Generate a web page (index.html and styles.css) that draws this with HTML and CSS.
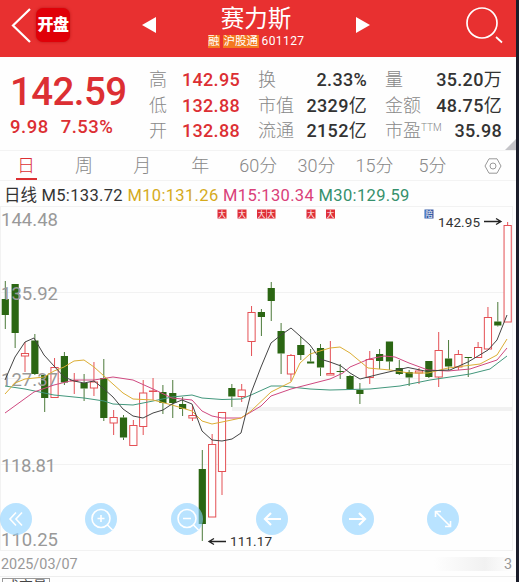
FILE: index.html
```html
<!DOCTYPE html>
<html lang="zh-CN">
<head>
  <meta charset="UTF-8" />
  <meta name="viewport" content="width=device-width, initial-scale=1.0" />
  <title>赛力斯 601127</title>
  <link rel="stylesheet" href="styles.css">
</head>
<body>
  <div class="app">
    <!-- header -->
    <header class="header">
      <svg class="back" width="22" height="38" viewBox="0 0 22 38"><path d="M20 2 3 18.5 20 35" /></svg>
      <span class="badge">开盘</span>
      <svg class="prev" width="14" height="16" viewBox="0 0 14 16"><path d="M0 8 14 0V16Z" /></svg>
      <div class="stock">
        <h1>赛力斯</h1>
        <div class="stock-sub"><span class="tag">融</span><span class="tag">沪股通</span><span class="code">601127</span></div>
      </div>
      <svg class="next" width="14" height="16" viewBox="0 0 14 16"><path d="M14 8 0 0V16Z" /></svg>
      <svg class="search" width="38" height="38" viewBox="0 0 38 38"><circle cx="17" cy="17" r="15" /><path d="m31 31 6 5.500" /></svg>
    </header>

    <!-- quote -->
    <section class="quote">
      <div class="price">
        <div class="last">142.59</div>
        <div class="change"><span>9.98</span><span>7.53%</span></div>
      </div>
      <dl class="stats up">
        <dt>高</dt><dd>142.95</dd>
        <dt>低</dt><dd>132.88</dd>
        <dt>开</dt><dd>132.88</dd>
      </dl>
      <dl class="stats mid">
        <dt>换</dt><dd>2.33%</dd>
        <dt>市值</dt><dd>2329<i>亿</i></dd>
        <dt>流通</dt><dd>2152<i>亿</i></dd>
      </dl>
      <dl class="stats last-col">
        <dt>量</dt><dd>35.20<i>万</i></dd>
        <dt>金额</dt><dd>48.75<i>亿</i></dd>
        <dt>市盈<sup>TTM</sup></dt><dd>35.98</dd>
      </dl>
      <span class="corner"></span>
    </section>

    <!-- period tabs -->
    <nav class="tabs">
      <a class="active">日</a><a>周</a><a>月</a><a>年</a><a>60分</a><a>30分</a><a>15分</a><a>5分</a>
      <svg class="gear" width="18" height="16" viewBox="0 0 18 16"><path d="M5 .8h8L17 8l-4 7.200H5L1 8Z" /><circle cx="9" cy="8" r="3" /></svg>
    </nav>

    <!-- moving averages -->
    <div class="legend">
      <span class="name">日线</span><span class="m5">M5:133.72</span><span class="m10">M10:131.26</span><span class="m15">M15:130.34</span><span class="m30">M30:129.59</span>
    </div>

    <!-- k-line -->
    <div class="chart">
      <svg id="kline" width="516" height="345" viewBox="0 206 516 345">
        <g class="grid">
          <path d="M0 206.500H513M0 292.500H513M0 378.500H513M0 464.500H513M0 550.500H513M.5 206V551M512.500 206V551" />
        </g>
        <rect class="band" x="232" y="407" width="281" height="4" />
        <g id="candles"></g>
        <g class="axis">
          <text x="1" y="226" textLength="57">144.48</text>
          <text x="1" y="300" textLength="57">135.92</text>
          <text x="1" y="386" textLength="57">127.37</text>
          <text x="1" y="472" textLength="55">118.81</text>
          <text x="1" y="546" textLength="57">110.25</text>
        </g>
        <g class="lines">
          <polyline class="m30" points="5,386 25,389 54,395 84,398 104,401 113,404 133,405 153,401 172,397 192,395 202,398 222,399.500 241,399 251,395 271,386 281,386 310,389 330,390 370,389 400,386 430,380 450,377 470,374 490,369 507,356" />
          <polyline class="m15" points="5,413 34,392 54,385 74,380 94,380 113,377 133,380 153,389 172,398 192,400 202,411 212,416 222,418 241,418 261,406 271,396 291,389 330,379 343,373 350,367 369,359 384,356 395,357 409,363 428,370 448,371 470,369 497,360 507,348" />
          <polyline class="m10" points="5,394 15,383 25,379 44,377 54,371 64,367 74,361 84,360 94,367 104,376 123,393 133,399 153,400 172,405 192,411 202,421 212,424 222,422 241,418 251,411 271,392 291,382 300,363 310,354 330,348 340,347 350,353 368,368 390,370 409,373 428,373 448,368 480,364 497,355 507,339" />
          <polyline class="m5" points="5,380 15,357 25,342 34,338 44,355 54,366 64,377 74,381 84,383 94,381 104,389 113,397 123,409 133,416 143,418 153,413 163,410 172,404 182,400 192,404 202,431 212,440 222,441 232,439 241,433 251,393 261,367 271,343 281,335 291,328 300,336 310,345 320,359 330,362 341,366 350,373 360,379 380,374 408,367.500 425,371 450,370 468,362 488,350 497,340 507,315" />
        </g>
        <g id="marks"></g>
        <g class="callout">
          <text x="438" y="227" textLength="42">142.95</text>
          <path d="M484 221.500h17m-5-3 5 3-5 3" />
          <text x="230" y="546" textLength="42">111.17</text>
          <path d="M226 541.500h-17m5-3-5 3 5 3" />
        </g>
      </svg>
      <div class="tools">
        <button><svg viewBox="0 0 32 32"><path d="m16 9.500-6 6.500 6 6.500M22 9.500 16 16l6 6.500" /></svg></button>
        <button><svg viewBox="0 0 32 32"><circle cx="16" cy="15.500" r="9" /><path d="M16 12v7M12.500 15.500h7M22.500 22l5 5" /></svg></button>
        <button><svg viewBox="0 0 32 32"><circle cx="16" cy="15.500" r="9" /><path d="M12 15.500h8M22.500 22l5 5" /></svg></button>
        <button><svg class="bold" viewBox="0 0 32 32"><path d="M25 16H9m6-6-6 6 6 6" /></svg></button>
        <button><svg class="bold" viewBox="0 0 32 32"><path d="M7 16h16m-6-6 6 6-6 6" /></svg></button>
        <button><svg viewBox="0 0 32 32"><path d="m9 9 14 14M8.500 14V8.500H14M23.500 18v5.500H18" /></svg></button>
      </div>
    </div>

    <div class="dates"><span>2025/03/07</span><span class="end">3</span></div>
    <div class="volume"><span>成交量</span></div>
  </div>

  <script>
    // [high, top, bottom, low, up]
    const data = [
      [281, 299, 315, 329, 0], [284, 284, 333, 348, 0], [342, 353.5, 356, 372, 1], [334, 340.5, 374, 375, 0],
      [374, 375, 398, 412, 0], [358, 367.5, 397.5, 398, 1], [352, 356, 382.5, 385, 0], [373, 380.5, 381, 394, 1],
      [374, 383, 388.5, 401, 0], [362, 382, 388, 396, 1], [359, 378, 418, 421, 0], [410, 417.5, 423, 435, 1],
      [415, 417.5, 437.5, 440, 0], [420, 425.5, 445.5, 446, 1], [380, 393, 426.5, 435, 1], [378, 391, 391.5, 400, 1],
      [385, 392, 403, 414, 0], [380, 393, 403, 418, 0], [397, 404, 409, 416, 0], [405, 415.5, 418, 421, 1],
      [450, 469, 524, 541, 0], [434, 444.5, 517, 517, 1], [412, 412.5, 471.5, 495, 1], [384, 388, 396.5, 407, 0],
      [384, 390, 396.5, 402, 1], [306, 312.5, 341.5, 356, 1], [309, 312, 317, 336, 0], [282, 288, 301, 321, 0],
      [323, 331, 353.5, 374, 0], [354, 355.5, 374, 381, 1], [337, 345, 355, 360, 0], [349, 361.5, 363.5, 363, 0],
      [344, 348, 367.5, 376, 0], [341, 373.5, 375, 375, 1], [364, 371, 372, 379, 0], [375, 376, 389, 389, 0],
      [383, 390, 394, 404, 0], [351, 359.5, 377.5, 384, 1], [349, 354, 361, 369, 0], [341.5, 341.5, 361.5, 370, 0],
      [360, 368, 374, 375, 0], [370, 372, 377.5, 386, 0], [368, 371, 373, 384, 1], [361, 361, 377, 378, 0],
      [332, 350.5, 377, 387, 1], [340, 358.5, 366.5, 370, 0], [350, 354.5, 367, 370, 1], [357, 357, 358, 377, 0],
      [342, 347.5, 357.5, 357, 1], [307, 317.5, 349, 349, 1], [302, 321.5, 325.5, 326.5, 0], [222, 225.5, 322, 322, 1]
    ];
    const step = 9.85;
    document.getElementById('candles').innerHTML = data.map(([high, top, bottom, low, up], i) => {
      const x = 5.3 + i * step;
      return `<g class="${up ? 'rise' : 'fall'}">
        <path d="M${x} ${high}V${top}M${x} ${bottom}V${Math.max(low, bottom)}" />
        <rect x="${x - 3.6}" y="${top}" width="7.2" height="${bottom - top}" /></g>`;
    }).join('');

    // event marks above the candles
    const marks = [[222, '大'], [242, '大'], [261.5, '大'], [271, '大'], [311, '大'], [330.5, '大'], [429, '陪', 'blue']];
    document.getElementById('marks').innerHTML = marks.map(([x, t, cls = '']) =>
      `<g class="mark ${cls}"><rect x="${x - 4.5}" y="209.5" width="9" height="9" /><text x="${x}" y="216.700">${t}</text></g>`
    ).join('');
  </script>
</body>
</html>
```

FILE: styles.css
```css
* {
  box-sizing: border-box;
}

body {
  margin: 0;
  height: 582px;
  overflow: hidden;
  background: #1b1d2a;
  font-family: Roboto, 'Noto Sans CJK SC', sans-serif;
}

.app {
  width: 516px;
  height: 582px;
  background: #fefefe;
  overflow: hidden;
}

/* header */
.header {
  height: 57px;
  display: flex;
  align-items: flex-start;
  background: #e83030;
  color: #fff;
}
.header svg {
  flex: none;
}
.back {
  margin: 7px 0 0 10px;
  fill: none;
  stroke: #fff;
  stroke-width: 2.2;
}
.badge {
  width: 34px;
  height: 34px;
  margin: 8px 0 0 4px;
  border-radius: 7px;
  background: #e00008;
  box-shadow: 0 0 3px #b81818;
  font-size: 16px;
  font-weight: 900;
  line-height: 34px;
  text-align: center;
  white-space: nowrap;
  letter-spacing: -0.5px;
}
.prev,
.next {
  margin-top: 17px;
  fill: #fff;
}
.prev {
  margin-left: 72px;
}
.stock {
  width: 200px;
  text-align: center;
}
.stock h1 {
  margin: 6px 0 0;
  font-size: 23.5px;
  font-weight: 400;
  line-height: 27px;
}
.stock-sub {
  display: flex;
  justify-content: center;
  gap: 3px;
  margin-top: 2px;
  font-size: 12px;
  line-height: 13px;
}
.code {
  letter-spacing: 0.4px;
}
.tag {
  background: #f4781f;
  padding: 0 0.5px;
  font-size: 11.5px;
}
.search {
  margin: 6px 0 0 95px;
  fill: none;
  stroke: #fff;
  stroke-width: 1.7;
}

/* quote */
.quote {
  position: relative;
  display: flex;
  height: 94px;
  border-bottom: 1px solid #f3f3f3;
}
.price {
  width: 149px;
  padding: 15px 0 0 10px;
  color: #dc2f33;
}
.last {
  font-size: 38.5px;
  font-weight: 500;
  line-height: 40px;
  letter-spacing: -0.6px;
}
.change {
  display: flex;
  gap: 12px;
  font-size: 18.5px;
  font-weight: 500;
  line-height: 30px;
  letter-spacing: 0.5px;
}
.stats {
  display: grid;
  grid-template-columns: auto auto;
  grid-auto-rows: 25.7px;
  justify-content: space-between;
  margin: 10px 0 0;
  width: 91px;
  line-height: 26px;
}
.stats dt {
  color: #888;
  font-size: 18px;
  font-weight: 300;
  white-space: nowrap;
}
.stats dd {
  margin: 0;
  color: #333;
  font-size: 18px;
  font-weight: 500;
  letter-spacing: 0.3px;
  text-align: right;
  white-space: nowrap;
}
.stats.up dd {
  color: #dc2f33;
}
.stats i {
  font-style: normal;
  font-weight: 400;
}
.stats.mid {
  width: 109px;
  margin-left: 18px;
}
/* the TTM mark may run past its label column */
.stats.last-col {
  grid-template-columns: 36px auto;
  width: 117px;
  margin-left: 18px;
}
.stats sup {
  font-size: 10px;
  line-height: 0;
  vertical-align: 6px;
}
.corner {
  position: absolute;
  right: 0;
  bottom: 0;
  border-left: 11px solid transparent;
  border-bottom: 11px solid #c4c4c8;
}

/* tabs */
.tabs {
  display: flex;
  height: 30px;
  border-bottom: 1px solid #f3f3f3;
  color: #888;
  font-size: 18px;
  font-weight: 300;
  line-height: 29px;
}
.tabs a {
  width: 58.1px;
  text-align: center;
  white-space: nowrap;
}
.tabs .active {
  width: 51px;
  margin-right: 4px;
  padding-left: 1px;
  color: #dc2f33;
  background: linear-gradient(#dc2f33, #dc2f33) 16px 100% / 21px 2px no-repeat;
}
.gear {
  margin: 7px 0 0 22px;
  fill: none;
  stroke: #999;
}

/* legend */
.legend {
  display: flex;
  gap: 4.5px;
  height: 25px;
  padding-left: 4px;
  color: #333;
  font-size: 16.5px;
  line-height: 30px;
  letter-spacing: 0.34px;
  white-space: nowrap;
}
.legend .name {
  letter-spacing: 0;
}
.legend .m10 {
  color: #d5aa1c;
}
.legend .m15 {
  color: #d94179;
}
.legend .m30 {
  color: #35906c;
}

/* chart */
.chart {
  position: relative;
  height: 345px;
}
.chart > svg {
  display: block;
}
.grid path {
  fill: none;
  stroke: #f2f2f2;
}
.band {
  fill: #f1f1f1;
}
.axis text {
  fill: #999;
  font-size: 18.5px;
}
.rise path,
.rise rect {
  fill: #fff;
  stroke: #e45055;
}
.fall path {
  stroke: #4c7a3a;
}
.fall rect {
  fill: #2b6613;
}
.lines polyline {
  fill: none;
  stroke-width: 1;
  stroke-linejoin: round;
}
.lines .m5 {
  stroke: #444;
}
.lines .m10 {
  stroke: #dcae35;
}
.lines .m15 {
  stroke: #cf4980;
}
.lines .m30 {
  stroke: #42977c;
}
.mark rect {
  fill: #df3038;
}
.mark.blue rect {
  fill: #365ca8;
}
.mark text {
  fill: #fff;
  font-size: 7.5px;
  text-anchor: middle;
}
.callout text {
  fill: #333;
  font-size: 13.5px;
}
.callout path {
  fill: none;
  stroke: #222;
  stroke-width: 1.3;
}

/* floating buttons over the chart */
.tools {
  position: absolute;
  left: 0;
  top: 297px;
  display: flex;
  gap: 53.4px;
}
.tools button {
  width: 32px;
  height: 32px;
  padding: 0;
  border: 0;
  border-radius: 50%;
  background: rgba(138, 209, 255, 0.6);
}
.tools svg {
  display: block;
  fill: none;
  stroke: #fff;
  stroke-width: 1.6;
}
.tools .bold {
  stroke-width: 2.2;
}

/* dates */
.dates {
  display: flex;
  justify-content: space-between;
  height: 26px;
  padding: 0 4px 0 1px;
  border-bottom: 1px solid #eee;
  color: #999;
  font-size: 14.4px;
  line-height: 27px;
}
.dates .end {
  width: 78px;
  text-align: right;
  background: linear-gradient(90deg, #fefefe, #f1f1f1 65%, #fefefe) center / 100% 14px no-repeat;
}
.volume {
  padding: 1px 0 0 2px;
}
.volume span {
  display: block;
  width: 48px;
  border: 1px solid #999;
  color: #444;
  font-size: 14px;
  line-height: 15px;
  text-align: center;
}
```
